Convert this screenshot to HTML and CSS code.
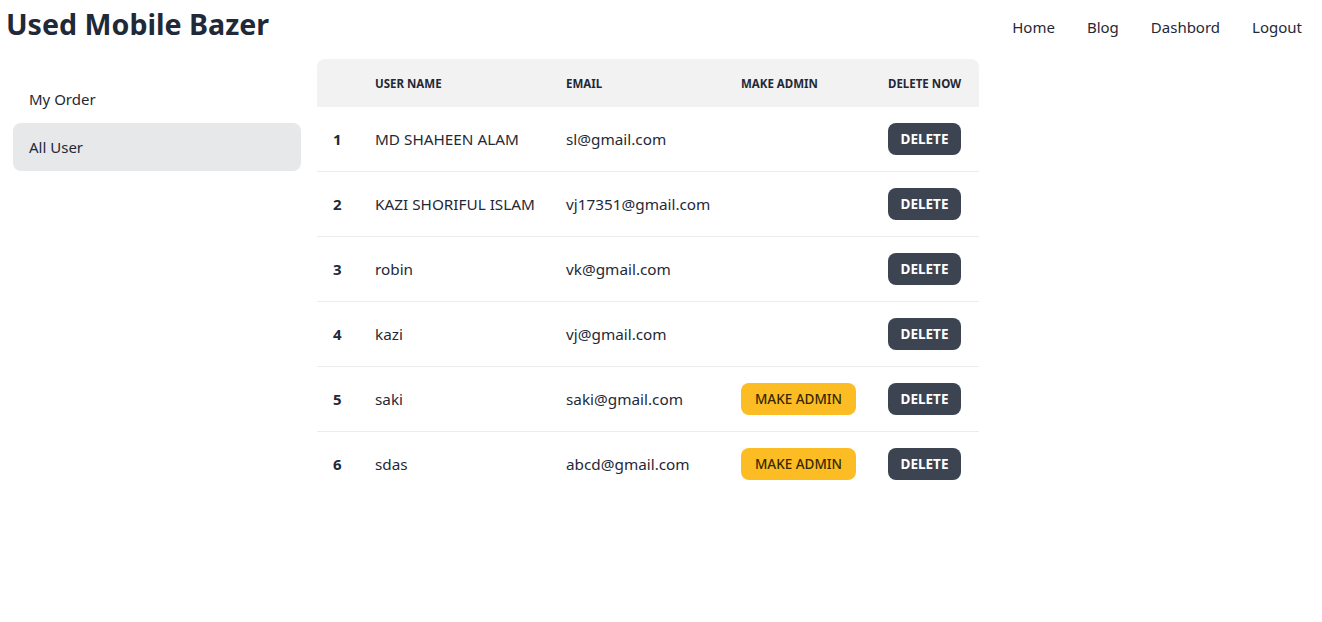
FILE: index.html
```html
<!DOCTYPE html>
<html>
<head>
<meta charset="utf-8">
<link rel="stylesheet" href="styles.css">
</head>
<body>
<header class="navbar">
  <div class="brand">Used Mobile Bazer</div>
  <nav class="menu">
    <a class="nav-link">Home</a>
    <a class="nav-link">Blog</a>
    <a class="nav-link">Dashbord</a>
    <a class="nav-link">Logout</a>
  </nav>
</header>
<main class="layout">
  <aside class="sidebar">
    <a class="side-item">My Order</a>
    <a class="side-item active">All User</a>
  </aside>
  <section class="content">
    <table class="table">
      <colgroup>
        <col class="c1"><col class="c2"><col class="c3"><col class="c4"><col class="c5">
      </colgroup>
      <thead>
        <tr><th></th><th>User Name</th><th>Email</th><th>Make Admin</th><th>Delete Now</th></tr>
      </thead>
      <tbody>
        <tr><td class="num">1</td><td>MD SHAHEEN ALAM</td><td>sl@gmail.com</td><td></td><td><button class="btn btn-delete">Delete</button></td></tr>
        <tr><td class="num">2</td><td>KAZI SHORIFUL ISLAM</td><td>vj17351@gmail.com</td><td></td><td><button class="btn btn-delete">Delete</button></td></tr>
        <tr><td class="num">3</td><td>robin</td><td>vk@gmail.com</td><td></td><td><button class="btn btn-delete">Delete</button></td></tr>
        <tr><td class="num">4</td><td>kazi</td><td>vj@gmail.com</td><td></td><td><button class="btn btn-delete">Delete</button></td></tr>
        <tr><td class="num">5</td><td>saki</td><td>saki@gmail.com</td><td><button class="btn btn-admin">Make Admin</button></td><td><button class="btn btn-delete">Delete</button></td></tr>
        <tr class="last"><td class="num">6</td><td>sdas</td><td>abcd@gmail.com</td><td><button class="btn btn-admin">Make Admin</button></td><td><button class="btn btn-delete">Delete</button></td></tr>
      </tbody>
    </table>
  </section>
</main>
</body>
</html>
```

FILE: styles.css
```css
* { box-sizing: border-box; }
html, body {
  margin: 0;
  padding: 0;
  background: #ffffff;
  color: #1f2937;
  font-family: "Noto Sans", "Open Sans", sans-serif;
  font-size: 15px;
}
.navbar {
  height: 59px;
  display: flex;
  align-items: flex-start;
  justify-content: space-between;
}
.brand {
  margin-left: 6px;
  margin-top: 4px;
  font-size: 28.6px;
  font-weight: 700;
  line-height: 40px;
  color: #1f2937;
}
.menu {
  display: flex;
  margin-top: 7px;
  margin-right: 4px;
}
.nav-link {
  display: block;
  padding: 0 16px;
  line-height: 40px;
  font-size: 15px;
  color: #1f2937;
}
.layout {
  display: flex;
  align-items: flex-start;
}
.sidebar {
  width: 317px;
  padding: 16px 16px 0 13px;
  display: flex;
  flex-direction: column;
}
.side-item {
  display: block;
  height: 48px;
  line-height: 48px;
  padding: 0 16px;
  border-radius: 8px;
  font-size: 15px;
  color: #1f2937;
}
.side-item.active {
  background: #e7e8ea;
}
.table {
  width: 662px;
  border-collapse: separate;
  border-spacing: 0;
  table-layout: fixed;
}
.c1 { width: 42px; }
.c2 { width: 191px; }
.c3 { width: 175px; }
.c4 { width: 147px; }
.c5 { width: 107px; }
.table th {
  background: #f2f2f2;
  height: 48px;
  padding: 0 16px;
  text-align: left;
  font-size: 11.5px;
  font-weight: 700;
  text-transform: uppercase;
  color: #1f2937;
  white-space: nowrap;
}
.table th:first-child { border-top-left-radius: 8px; }
.table th:last-child { border-top-right-radius: 8px; }
.table td {
  height: 65px;
  padding: 0 16px;
  border-bottom: 1px solid #ececec;
  font-size: 15.3px;
  white-space: nowrap;
  vertical-align: middle;
}
.table tr.last td { border-bottom: none; height: 64px; }
.table td.num { font-weight: 700; font-size: 15px; }
.btn {
  height: 32px;
  border: none;
  border-radius: 8px;
  font-family: inherit;
  text-transform: uppercase;
  font-size: 13.5px;
  padding: 0;
  cursor: pointer;
}
.btn-delete {
  width: 73px;
  background: #3d4451;
  color: #ffffff;
  font-weight: 700;
}
.btn-admin {
  width: 115px;
  background: #fbbd23;
  color: #382800;
  font-weight: 500;
}
```
